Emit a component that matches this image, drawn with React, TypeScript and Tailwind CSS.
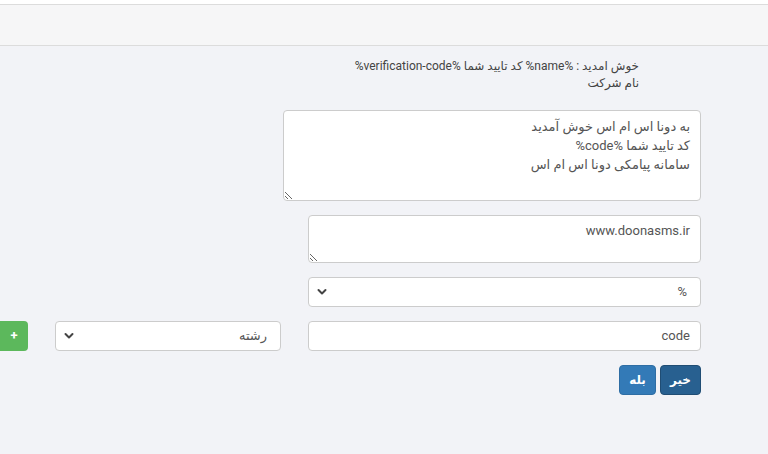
import React from "react";

function Chevron() {
  return (
    <svg width="10" height="8" viewBox="0 0 10 8" className="shrink-0">
      <path d="M1.5 2 L5 5.5 L8.5 2" fill="none" stroke="#444" strokeWidth="2" strokeLinecap="round" strokeLinejoin="round" />
    </svg>
  );
}

function Select({ value, className }: { value: string; className: string }) {
  return (
    <div className={`h-[30px] flex items-center justify-between bg-white border border-[#ccc] rounded-[4px] pr-[13px] pl-[8px] ${className}`}>
      <span className="text-[13px] text-[#555]">{value}</span>
      <Chevron />
    </div>
  );
}

export default function App() {
  return (
    <div
      dir="rtl"
      className="w-[768px] h-[454px] overflow-hidden bg-[#f2f3f7] text-[#444]"
      style={{ fontFamily: 'Roboto, "DejaVu Sans", sans-serif' }}
    >
      <div className="h-[4px] bg-white" />
      <div className="h-[42px] bg-[#f6f6f7] border-y border-[#dcdcdc]" />

      <div className="pr-[129px] pt-[12px] text-[12px] leading-[17px] text-[#444]">
        <div>خوش امدید : %name% کد تایید شما %verification-code%</div>
        <div>نام شرکت</div>
      </div>

      <div className="pr-[67px] mt-[18px] flex flex-col gap-[14px]">
        <textarea
          readOnly
          defaultValue={"به دونا اس ام اس خوش آمدید\nکد تایید شما %code%\nسامانه پیامکی دونا اس ام اس"}
          className="w-[418px] h-[91px] bg-white border border-[#ccc] rounded-[4px] px-[10px] pt-[6px] text-[13px] leading-[19px] text-[#555] outline-none resize-y"
        />
        <textarea
          readOnly
          defaultValue="www.doonasms.ir"
          className="w-[393px] h-[48px] bg-white border border-[#ccc] rounded-[4px] px-[10px] pt-[5px] text-[13px] leading-[19px] text-[#555] outline-none resize-y"
        />
        <Select value="%" className="w-[393px]" />
        <div className="flex items-center">
          <div className="w-[393px] h-[30px] flex items-center bg-white border border-[#ccc] rounded-[4px] px-[10px] text-[13px] text-[#555]">
            code
          </div>
          <Select value="رشته" className="w-[226px] mr-[27px]" />
          <button className="w-[40px] h-[30px] mr-[27px] ml-[-12px] rounded-[4px] bg-[#5cb85c] text-white text-[13px] font-bold flex items-center justify-center pl-[12px]">
            +
          </button>
        </div>
        <div className="flex gap-[4px]">
          <button className="w-[41px] h-[30px] rounded-[4px] bg-[#286090] border border-[#204d74] text-white text-[12px] font-bold">
            خیر
          </button>
          <button className="w-[37px] h-[30px] rounded-[4px] bg-[#337ab7] border border-[#2e6da4] text-white text-[12px] font-bold">
            بله
          </button>
        </div>
      </div>
    </div>
  );
}
